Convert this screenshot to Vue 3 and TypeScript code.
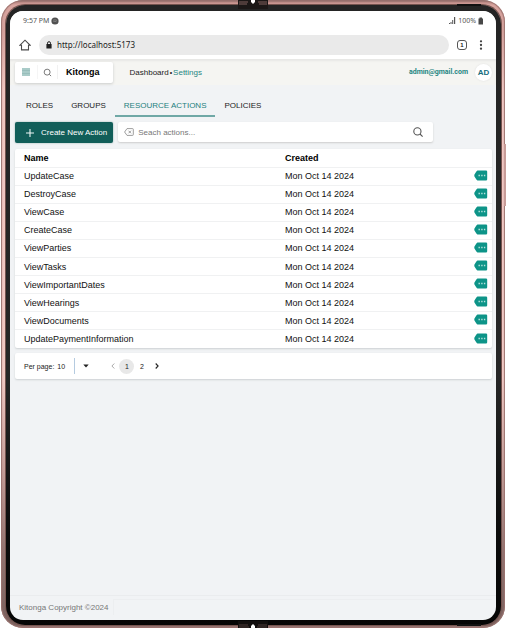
<script setup lang="ts">
import { ref } from 'vue'

interface Action {
  name: string
  created: string
}

const tabs = ['ROLES', 'GROUPS', 'RESOURCE ACTIONS', 'POLICIES']
const activeTab = ref('RESOURCE ACTIONS')
const query = ref('')
const perPage = ref(10)
const page = ref(1)
const actions: Action[] = [
  'UpdateCase',
  'DestroyCase',
  'ViewCase',
  'CreateCase',
  'ViewParties',
  'ViewTasks',
  'ViewImportantDates',
  'ViewHearings',
  'ViewDocuments',
  'UpdatePaymentInformation',
].map((name) => ({ name, created: 'Mon Oct 14 2024' }))
</script>

<template>
  <div class="device">
    <svg class="hinge hinge-top" viewBox="0 0 30 9" width="30" height="9">
      <path d="M0 0h30v9H0z" fill="#1b1716" />
      <path d="M1 2h9M1 4h8M20 2h9M21 4h8" stroke="#80605c" />
      <path d="M13 0h4v2l-2 2-2-2z" fill="#fff" />
    </svg>
    <svg class="hinge hinge-bottom" viewBox="0 0 30 7" width="30" height="7">
      <path d="M0 0h30v7H0z" fill="#110e0d" />
      <path d="M1 4h9M1 6h10M20 4h9M19 6h10" stroke="#4d3a38" />
      <path d="M13 7h4V5l-2-2-2 2z" fill="#fff" />
    </svg>
    <span class="slot slot-top"></span>
    <span class="slot slot-bottom"></span>
    <span class="power"></span>
    <div class="bezel">
      <div class="screen">
        <div class="status">
          <span>9:57 PM</span>
          <svg class="status-dot" viewBox="0 0 8 8" width="8" height="8">
            <circle cx="4" cy="4" r="3.6" fill="#505050" />
            <path d="M2 3.2q2-.9 4 .2M2.300 4.600q1.700-.6 3.200.2" stroke="#999" stroke-width=".6" fill="none" />
          </svg>
          <span class="grow"></span>
          <svg viewBox="0 0 7 8" width="7" height="8" fill="#555">
            <path d="M0 6h1v1H0zM1.500 5h1v2h-1zM3.200 3h1v4h-1zM5 0h1.200v7H5z" />
          </svg>
          <span class="charge">100%</span>
          <svg viewBox="0 0 6 8" width="6" height="8">
            <path d="M1.500.5h2.500v1h1v6H.5v-6h1z" fill="#484848" />
          </svg>
        </div>

        <div class="browser">
          <button class="plain" aria-label="Home">
            <svg viewBox="0 0 12 12" width="12" height="12" fill="none" stroke="#4a4a4a" stroke-width="1.100">
              <path d="M.8 6.300 6 1.200l5.200 5.100H9.500v4.600h-7V6.300z" />
            </svg>
          </button>
          <div class="address">
            <svg viewBox="0 0 6 8" width="6" height="8">
              <rect x=".4" y="3" width="5.200" height="4.500" rx=".5" fill="#222" />
              <path d="M1.500 3.300V2.200a1.500 1.500 0 0 1 3 0v1.100" fill="none" stroke="#222" />
            </svg>
            <span>http://localhost:5173</span>
          </div>
          <button class="plain tab-count" aria-label="Open tabs">1</button>
          <button class="plain dots" aria-label="Browser menu">
            <svg viewBox="0 0 4 10" width="4" height="10" fill="#444">
              <circle cx="2" cy="1.300" r="1.150" /><circle cx="2" cy="5" r="1.150" /><circle cx="2" cy="8.700" r="1.150" />
            </svg>
          </button>
        </div>

        <header class="topbar">
          <div class="brand">
            <button class="plain menu" aria-label="Menu">
              <svg viewBox="0 0 8 8" width="8" height="8">
                <rect width="8" height="8" fill="#a9cbc8" />
                <path d="M0 2.500h8M0 5.500h8" stroke="#96bab7" stroke-width=".8" />
              </svg>
            </button>
            <button class="plain find" aria-label="Search">
              <svg viewBox="0 0 10 10" width="9" height="9" fill="none" stroke="#777" stroke-width="1.100">
                <circle cx="4.600" cy="4.600" r="3.300" /><path d="m7 7 2 2" />
              </svg>
            </button>
            <strong>Kitonga</strong>
          </div>
          <nav class="crumbs" aria-label="Breadcrumb">
            <a href="#dashboard">Dashboard</a><i>•</i><a href="#settings" class="teal">Settings</a>
          </nav>
          <span class="grow"></span>
          <a class="mail" href="#account">admin@gmail.com</a>
          <span class="avatar">AD</span>
        </header>

        <main>
          <nav class="tabs" aria-label="Sections">
            <button
              v-for="tab in tabs"
              :key="tab"
              :class="['plain', 'tab', { active: tab === activeTab }]"
              @click="activeTab = tab"
            >{{ tab }}</button>
          </nav>

          <div class="tools">
            <button class="create">
              <svg viewBox="0 0 8 8" width="8" height="8" stroke="#eef6f5" stroke-width="1.100">
                <path d="M4 0v8M0 4h8" />
              </svg>
              Create New Action
            </button>
            <div class="search">
              <svg viewBox="0 0 10 8" width="10" height="8" fill="none" stroke="#858585" stroke-width=".8">
                <path d="M3 .6h5.500q.8 0 .8.800v5.200q0 .8-.8.800H3L.6 4zM4.500 2.700l2.600 2.600M7.100 2.700l-2.600 2.600" />
              </svg>
              <input v-model="query" aria-label="Search actions" placeholder="Seach actions..." />
              <button class="plain" aria-label="Run search">
                <svg viewBox="0 0 10 10" width="10" height="10" fill="none" stroke="#555" stroke-width="1.100">
                  <circle cx="4.400" cy="4.400" r="3.600" /><path d="m7 7 2.600 2.600" />
                </svg>
              </button>
            </div>
          </div>

          <div class="card">
            <table>
              <thead>
                <tr><th class="name">Name</th><th>Created</th><th class="more" aria-label="Options"></th></tr>
              </thead>
              <tbody>
                <tr v-for="action in actions" :key="action.name">
                  <td>{{ action.name }}</td>
                  <td>{{ action.created }}</td>
                  <td class="more">
                    <button class="plain" :aria-label="`Options for ${action.name}`">
                      <svg viewBox="0 0 14 11" width="14" height="11">
                        <path d="M3.500.5H12q1.200 0 1.200 1.200v7.600q0 1.200-1.200 1.200H3.500Q2.800 10.500.5 6.500q-.5-1 0-2Q2.800.5 3.500.5z" fill="#0d9488" />
                        <path d="M4.500 4.800h1.400v1.400H4.500zM7.200 4.800h1.400v1.400H7.200zM9.900 4.800h1.400v1.400H9.900z" fill="#b5e2dd" />
                      </svg>
                    </button>
                  </td>
                </tr>
              </tbody>
            </table>
          </div>

          <div class="card pager">
            <label for="per-page">Per page:</label>
            <select id="per-page" v-model="perPage">
              <option :value="10">10</option>
              <option :value="20">20</option>
            </select>
            <svg class="caret" viewBox="0 0 6 4" width="6" height="4"><path d="M.3.500h5.400L3 3.500z" fill="#222" /></svg>
            <button class="plain step" aria-label="Previous page" :disabled="page === 1" @click="page = 1">
              <svg viewBox="0 0 4 6" width="4" height="6" fill="none" stroke="#aaa"><path d="M3.300.5.900 3l2.400 2.500" /></svg>
            </button>
            <button v-for="n in 2" :key="n" :class="['plain', 'page', { current: n === page }]" @click="page = n">{{ n }}</button>
            <button class="plain step last" aria-label="Next page" @click="page = 2">
              <svg viewBox="0 0 4 6" width="4" height="6" fill="none" stroke="#222" stroke-width="1.100"><path d="M.7.500 3.100 3 .7 5.500" /></svg>
            </button>
          </div>
        </main>

        <footer>
          <span>Kitonga Copyright ©2024</span>
          <div class="footer-panel"></div>
        </footer>
      </div>
    </div>
  </div>
</template>

<style>
body {
  background: #fff;
}
</style>

<style scoped>
* {
  box-sizing: border-box;
}
.device {
  position: relative;
  display: flex;
  min-height: 100vh;
  margin: 0 1px;
  padding: 5px 4px 3px 5px;
  border-radius: 22px;
  background: linear-gradient(180deg, #665250 0, #b98783 2px, #d9a5a0 5px, #d4a19c 30px, #efc5c0 90px, #f0c8c3 60%, #c39c97 75%, #927370 88%, #79615e calc(100% - 3px), #ac8581);
  box-shadow: inset 0 0 1px 1px #9b736f;
}
.bezel {
  flex: 1;
  display: flex;
  min-width: 0;
  padding: 6px 5px 5px 4px;
  border-radius: 19px;
  background: linear-gradient(180deg, #242424 0, #262626 60%, #0c0c0c 85%, #050505);
  box-shadow: 0 0 0 1px #76544f;
}
.screen {
  flex: 1;
  display: flex;
  flex-direction: column;
  min-width: 0;
  overflow: hidden;
  border-radius: 13px;
  background: #f1f3f5;
  font-family: "Liberation Sans", Arial, sans-serif;
  font-size: 9px;
  color: #222;
}
.hinge {
  position: absolute;
  left: 50%;
  margin-left: -15px;
}
.hinge-top {
  top: 0;
}
.hinge-bottom {
  bottom: 0;
}
.slot {
  position: absolute;
  right: 24px;
  width: 24px;
  height: 2px;
  background: #111;
}
.slot-top {
  top: 4px;
}
.slot-bottom {
  bottom: 2px;
}
.power {
  position: absolute;
  top: 144px;
  right: -1px;
  width: 2px;
  height: 62px;
  background: #c79c98;
}
.plain {
  display: inline-flex;
  align-items: center;
  justify-content: center;
  padding: 0;
  border: 0;
  background: none;
  font: inherit;
  color: inherit;
}
.grow {
  flex: 1;
}
a {
  color: inherit;
  text-decoration: none;
}
svg {
  flex: none;
  display: block;
}
.status {
  display: flex;
  align-items: center;
  height: 19px;
  padding: 0 12px 0 13px;
  background: #fff;
  color: #555;
  font-family: "Noto Sans", sans-serif;
  font-size: 7px;
}
.status-dot {
  margin-left: 2px;
}
.charge {
  margin: 0 2px;
}
.browser {
  display: flex;
  align-items: center;
  gap: 8px;
  height: 29px;
  padding: 0 13px 0 9px;
  background: #fff;
}
.address {
  flex: 1;
  display: flex;
  align-items: center;
  gap: 5px;
  height: 20px;
  padding: 0 7px;
  border-radius: 10px;
  background: #eaeaea;
  color: #222;
  font-family: "Noto Sans", sans-serif;
  font-size: 8px;
}
.tab-count {
  width: 10px;
  height: 10px;
  border: 1px solid #555;
  border-radius: 3px;
  font-size: 6px;
  font-weight: bold;
}
.dots {
  margin-left: 4px;
}
.topbar {
  display: flex;
  align-items: center;
  height: 26px;
  padding: 0 4px 0 5px;
  background: #f5f5f2;
  box-shadow: inset 0 2px 2px #e7e7e5;
}
.brand {
  display: flex;
  align-items: center;
  height: 21px;
  padding: 0 13px 0 7px;
  border-radius: 2px;
  background: #fff;
  box-shadow: 0 1px 3px #c9cbcb;
  color: #000;
}
.brand strong {
  margin-left: 8px;
}
.menu {
  width: 16px;
  height: 14px;
  border-right: 1px solid #f5f5f5;
  padding-right: 7px;
}
.find {
  width: 20px;
  height: 14px;
  border-right: 1px solid #f1f1f1;
}
.crumbs {
  display: flex;
  align-items: center;
  gap: 1px;
  margin-left: 17px;
  font-size: 8px;
  color: #222;
}
.crumbs i {
  font-style: normal;
  font-size: 7px;
}
.crumbs .teal {
  color: #258682;
}
.mail {
  margin-right: 7px;
  color: #1e8582;
  font-family: Roboto, sans-serif;
  font-size: 7px;
  font-weight: bold;
}
.avatar {
  display: grid;
  place-items: center;
  width: 17px;
  height: 17px;
  border-radius: 50%;
  background: #fff;
  box-shadow: 0 0 2px #ddd;
  color: #176c7d;
  font-size: 8px;
  font-weight: bold;
}
main {
  flex: 1;
  padding: 10px 4px 0 5px;
}
.tabs {
  display: flex;
  height: 22px;
  padding-left: 2px;
}
.tab {
  padding: 0 9px;
  border-bottom: 2px solid transparent;
  font-size: 8px;
  color: #222;
}
.tab.active {
  border-color: #70a8a6;
  color: #24807d;
}
.tools {
  display: flex;
  gap: 5px;
  margin-top: 5px;
}
.create {
  display: flex;
  align-items: center;
  gap: 7px;
  height: 21px;
  padding: 0 6px 0 11px;
  border: 0;
  border-radius: 2px;
  background: #115e59;
  box-shadow: 0 0 2px #8daaa8;
  color: #fff;
  font: 8px "Liberation Sans", Arial, sans-serif;
}
.search {
  display: flex;
  align-items: center;
  width: 66%;
  height: 20px;
  padding: 0 10px 0 6px;
  border-radius: 2px;
  background: #fff;
  box-shadow: 0 1px 2px #ccc;
}
.search input {
  flex: 1;
  min-width: 0;
  padding: 0 4px;
  border: 0;
  outline: 0;
  background: none;
  font: 8px "Liberation Sans", Arial, sans-serif;
}
.search input::placeholder {
  color: #777;
}
.card {
  margin-top: 5px;
  border-radius: 2px;
  background: #fff;
  box-shadow: 0 1px 2px #ccd0d2;
}
.tools + .card {
  margin-top: 6px;
}
table {
  width: 100%;
  height: 199px;
  table-layout: fixed;
  border-collapse: collapse;
}
tr {
  height: 18px;
}
tbody tr {
  border-top: 1px solid #f0f1f2;
}
th,
td {
  padding: 0 0 0 9px;
  text-align: left;
  line-height: 10px;
  white-space: nowrap;
  color: #111;
}
th {
  color: #000;
}
.name {
  width: 261px;
}
.more {
  width: 40px;
  padding: 0 4px 2px 0;
  text-align: right;
}
.more button {
  vertical-align: middle;
}
.pager {
  display: flex;
  align-items: center;
  height: 26px;
  padding-left: 9px;
  font-size: 7px;
}
.pager label {
  font-size: 7px;
}
.pager select {
  width: 18px;
  height: 16px;
  margin-left: 3px;
  padding: 0;
  border: 0;
  border-right: 1px solid #b5cbe0;
  appearance: none;
  background: none;
  font: inherit;
  color: inherit;
}
.caret {
  margin: 0 18px 0 8px;
}
.step {
  width: 12px;
}
.last {
  width: 15px;
}
.page {
  width: 15px;
  height: 15px;
  border-radius: 50%;
}
.current {
  background: #e8e8e8;
}
footer {
  display: flex;
  align-items: center;
  gap: 4px;
  height: 25px;
  padding: 0 4px 2px 9px;
  border-top: 1px solid #eaecee;
  color: #777;
  font-size: 8px;
}
.footer-panel {
  flex: 1;
  height: 16px;
  border: solid #eceef0;
  border-width: 1px 0 0 1px;
}
</style>
